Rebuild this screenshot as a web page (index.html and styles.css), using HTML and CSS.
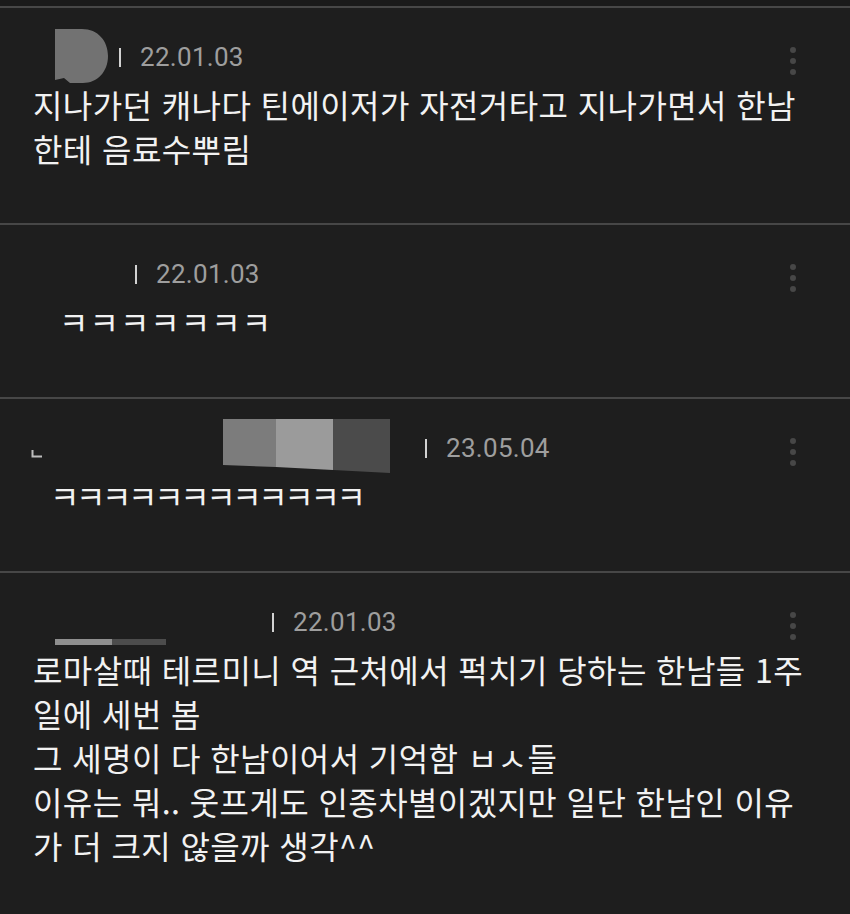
FILE: index.html
```html
<!DOCTYPE html>
<html lang="ko">
<head>
<meta charset="utf-8">
<title>댓글</title>
<link rel="stylesheet" href="styles.css">
</head>
<body>
<div class="top-strip"></div>
<section class="comment comment-first">
  <div class="meta">
    <div class="name name-1">
      <svg class="blob" width="53" height="55" viewBox="0 0 53 55"><path d="M0 0 L27 0 C43 0 53 12 53 27 C53 43 42 54 28 54 L15 54 L9 49 L0 51 Z" fill="#727272"/></svg>
    </div>
    <span class="sep"></span>
    <span class="date">22.01.03</span>
    <svg class="more" width="8" height="30" viewBox="0 0 8 30"><circle cx="4" cy="4" r="3"/><circle cx="4" cy="15" r="3"/><circle cx="4" cy="26" r="3"/></svg>
  </div>
  <p class="text">지나가던 캐나다 틴에이저가 자전거타고 지나가면서 한남한테 음료수뿌림</p>
</section>
<section class="comment">
  <div class="meta">
    <div class="name name-2"></div>
    <span class="sep"></span>
    <span class="date">22.01.03</span>
    <svg class="more" width="8" height="30" viewBox="0 0 8 30"><circle cx="4" cy="4" r="3"/><circle cx="4" cy="15" r="3"/><circle cx="4" cy="26" r="3"/></svg>
  </div>
  <p class="text text-indent-2">ㅋㅋㅋㅋㅋㅋㅋ</p>
</section>
<section class="comment">
  <div class="meta">
    <div class="name name-3">
      <svg class="mark" width="12" height="8" viewBox="0 0 12 8"><path d="M1.5 0 V6.5 H11" stroke="#bdbdbd" stroke-width="2" fill="none"/></svg>
      <svg class="blur-box" width="167" height="54" viewBox="0 0 167 54">
        <polygon points="0,0 53,0 53,48 0,46" fill="#7c7c7c"/>
        <polygon points="53,0 110,0 110,51 53,48" fill="#9b9b9b"/>
        <polygon points="110,0 167,0 167,54 110,51" fill="#4b4b4b"/>
      </svg>
    </div>
    <span class="sep"></span>
    <span class="date">23.05.04</span>
    <svg class="more" width="8" height="30" viewBox="0 0 8 30"><circle cx="4" cy="4" r="3"/><circle cx="4" cy="15" r="3"/><circle cx="4" cy="26" r="3"/></svg>
  </div>
  <p class="text text-tight">ㅋㅋㅋㅋㅋㅋㅋㅋㅋㅋㅋㅋ</p>
</section>
<section class="comment">
  <div class="meta">
    <div class="name name-4">
      <span class="bar-light"></span><span class="bar-dark"></span>
    </div>
    <span class="sep"></span>
    <span class="date">22.01.03</span>
    <svg class="more" width="8" height="30" viewBox="0 0 8 30"><circle cx="4" cy="4" r="3"/><circle cx="4" cy="15" r="3"/><circle cx="4" cy="26" r="3"/></svg>
  </div>
  <p class="text">로마살때 테르미니 역 근처에서 퍽치기 당하는 한남들 1주일에 세번 봄<br>그 세명이 다 한남이어서 기억함 ㅂㅅ들<br>이유는 뭐.. 웃프게도 인종차별이겠지만 일단 한남인 이유가 더 크지 않을까 생각^^</p>
</section>
</body>
</html>
```
FILE: styles.css
```css
* { box-sizing: border-box; }
html, body {
  margin: 0;
  padding: 0;
  background: #1e1e1e;
}
body {
  font-family: "Noto Sans CJK KR", "Noto Sans", sans-serif;
  color: #f2f2f2;
}
.top-strip {
  height: 6px;
  background: #1a1a1a;
}
.comment {
  border-top: 2px solid #474747;
  padding: 21px 33px 54px 33px;
}
.comment-first { padding-bottom: 53px; }
.meta {
  display: flex;
  align-items: center;
  height: 56px;
}
.name {
  display: flex;
  align-self: stretch;
  align-items: center;
  flex-shrink: 0;
}
.name-1 { width: 75px; justify-content: flex-end; }
.name-1 .blob { display: block; margin-top: -2px; }
.name-2 { width: 91px; }
.name-3 { width: 381px; }
.name-3 .mark { display: block; margin-left: -2px; margin-top: 12px; }
.name-3 .blur-box { display: block; margin-left: 180px; margin-top: -4px; }
.name-4 {
  width: 228px;
  align-items: flex-start;
  padding-top: 45px;
  padding-left: 22px;
}
.bar-light, .bar-dark { display: block; height: 6px; }
.bar-light { width: 57px; background: #8f8f8f; }
.bar-dark { width: 54px; background: #4c4c4c; }
.sep {
  width: 2px;
  height: 19px;
  background: #d2d2d2;
  margin-left: 11px;
  flex-shrink: 0;
}
.date {
  font-family: Roboto, "Liberation Sans", sans-serif;
  font-size: 26px;
  color: #9e9e9e;
  margin-left: 19px;
  letter-spacing: 0.3px;
}
.more {
  margin-left: auto;
  margin-right: 20px;
  margin-top: 8px;
  fill: #474747;
}
.text {
  margin: -3px 0 0 0;
  font-size: 32px;
  line-height: 44px;
  letter-spacing: 0.4px;
  word-break: break-all;
}
.text-indent-2 { padding-left: 26px; letter-spacing: 1px; }
.text-tight { padding-left: 17px; letter-spacing: -3.4px; }
```
